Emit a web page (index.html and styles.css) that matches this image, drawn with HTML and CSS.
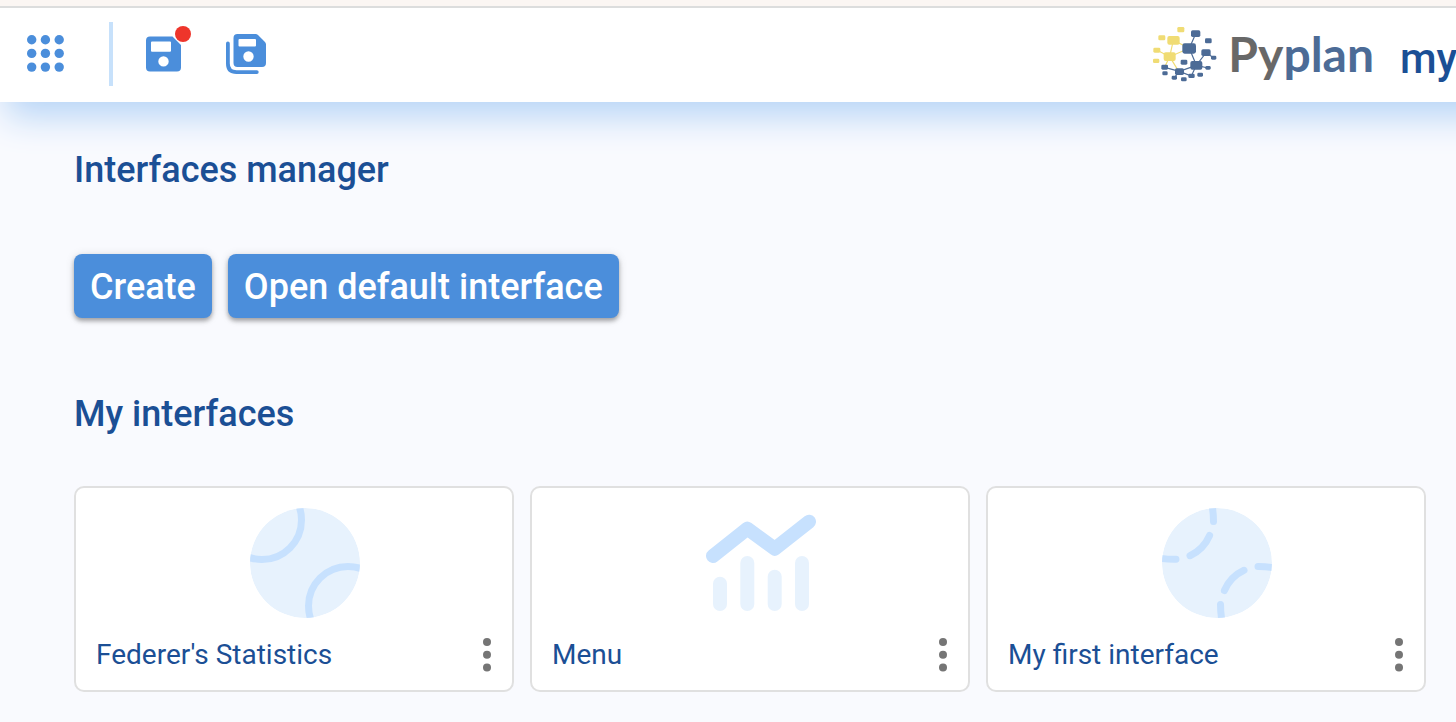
FILE: index.html
```html
<!DOCTYPE html>
<html lang="en">
<head>
<meta charset="utf-8">
<title>Pyplan - Interfaces manager</title>
<link rel="stylesheet" href="styles.css">
</head>
<body>
<header class="topbar">
  <button class="icon-button" type="button" aria-label="Applications">
    <svg width="40" height="40" viewBox="0 0 40 40" fill="currentColor">
      <circle cx="6.7" cy="5.7" r="4.7"/><circle cx="20.4" cy="5.7" r="4.7"/><circle cx="34.2" cy="5.7" r="4.7"/>
      <circle cx="6.7" cy="19.4" r="4.7"/><circle cx="20.4" cy="19.4" r="4.7"/><circle cx="34.2" cy="19.4" r="4.7"/>
      <circle cx="6.7" cy="33.1" r="4.7"/><circle cx="20.4" cy="33.1" r="4.7"/><circle cx="34.2" cy="33.1" r="4.7"/>
    </svg>
  </button>
  <span class="divider"></span>
  <button class="icon-button save" type="button" aria-label="Save">
    <svg width="40" height="40" viewBox="0 0 40 40" fill="currentColor">
      <path fill-rule="evenodd" d="M6 2.5H28.5L37 11V33.500A4 4 0 0 1 33 37.500H6A4 4 0 0 1 2 33.500V6.500A4 4 0 0 1 6 2.500ZM8 7.500A1 1 0 0 0 7 8.500V16.800A1 1 0 0 0 8 17.800H26A1 1 0 0 0 27 16.800V8.500A1 1 0 0 0 26 7.500ZM19.500 22.200A5.200 5.200 0 1 0 19.500 32.600A5.200 5.200 0 1 0 19.500 22.200Z"/>
    </svg>
    <span class="unsaved"></span>
  </button>
  <button class="icon-button" type="button" aria-label="Save as">
    <svg width="40" height="40" viewBox="0 0 40 40" fill="currentColor">
      <path fill-rule="evenodd" d="M11.500 0H29.500Q31 0 32 1L39 8Q40 9 40 10.500V29A4 4 0 0 1 36 33H11.500A4 4 0 0 1 7.500 29V4A4 4 0 0 1 11.500 0ZM13.500 5A1 1 0 0 0 12.500 6V11.500A1 1 0 0 0 13.500 12.500H29A1 1 0 0 0 30 11.500V6A1 1 0 0 0 29 5ZM22.500 17.300A5.200 5.200 0 1 0 22.500 27.700A5.200 5.200 0 1 0 22.500 17.300Z"/>
      <path d="M1.900 9.500V29.500Q1.900 38.100 10.500 38.100H30.800" fill="none" stroke="currentColor" stroke-width="3.800" stroke-linecap="round"/>
    </svg>
  </button>
  <div class="brand">
    <svg class="brand-mark" width="66" height="57" viewBox="36 30 198 171">
      <g stroke="#f0dc74" stroke-width="3.500" fill="none">
        <path d="M50 102L89 122L148 97M100 73L89 122L116 166M89 122L74 153M100 73L148 97"/>
      </g>
      <g stroke="#4c6b96" stroke-width="3.500" fill="none">
        <path d="M167 53L148 97L169 148L198 110L221 125M169 148L204 156M169 148L118 166L74 154M118 166L154 180L169 148M118 166L103 185"/>
      </g>
      <g fill="#f0dc74">
        <rect x="82" y="60" width="37" height="26" rx="6"/><rect x="71" y="109" width="36" height="26" rx="6"/>
        <rect x="112" y="33" width="21" height="16" rx="4"/><rect x="55" y="58" width="21" height="15" rx="4"/>
        <rect x="40" y="95" width="21" height="15" rx="4"/><rect x="39" y="128" width="19" height="13" rx="4"/>
      </g>
      <g fill="#4c6b96">
        <rect x="127" y="82" width="41" height="31" rx="7"/><rect x="153" y="43" width="28" height="20" rx="5"/>
        <rect x="195" y="67" width="20" height="15" rx="4"/><rect x="184" y="100" width="28" height="20" rx="5"/>
        <rect x="213" y="119" width="16" height="12" rx="4"/><rect x="151" y="135" width="36" height="26" rx="6"/>
        <rect x="122" y="131" width="20" height="15" rx="4"/><rect x="64" y="146" width="20" height="15" rx="4"/>
        <rect x="67" y="166" width="16" height="12" rx="4"/><rect x="105" y="157" width="27" height="20" rx="5"/>
        <rect x="95" y="179" width="16" height="12" rx="4"/><rect x="123" y="184" width="17" height="12" rx="4"/>
        <rect x="145" y="173" width="19" height="13" rx="4"/><rect x="172" y="170" width="17" height="12" rx="4"/>
        <rect x="196" y="150" width="16" height="11" rx="4"/>
      </g>
    </svg>
    <span class="brand-name">Py<span class="brand-accent">plan</span></span>
  </div>
  <div class="app-name">my</div>
</header>
<main class="content">
  <h1 class="heading">Interfaces manager</h1>
  <div class="actions">
    <button class="action" type="button">Create</button>
    <button class="action" type="button">Open default interface</button>
  </div>
  <h2 class="heading">My interfaces</h2>
  <div class="cards">
    <article class="card">
      <svg class="card-icon" width="110" height="110" viewBox="0 0 110 110">
        <clipPath id="ball"><circle cx="55" cy="55" r="55"/></clipPath>
        <g clip-path="url(#ball)">
          <circle cx="55" cy="55" r="55" fill="#e7f2fd"/>
          <g fill="none" stroke="#c7e1fe" stroke-width="7">
            <circle cx="12" cy="12" r="39.500"/><circle cx="98" cy="98" r="39.500"/>
          </g>
        </g>
      </svg>
      <div class="card-foot">
        <a class="card-title" href="#federer">Federer's Statistics</a>
        <button class="more" type="button" aria-label="Options for Federer's Statistics"><svg width="8" height="34" viewBox="0 0 8 34" fill="currentColor"><circle cx="4" cy="4" r="4"/><circle cx="4" cy="16.800" r="4"/><circle cx="4" cy="29.600" r="4"/></svg></button>
      </div>
    </article>
    <article class="card">
      <svg class="card-icon" width="110" height="110" viewBox="0 0 110 110">
        <path d="M7 48L41.300 20.700L68.700 40.700L103 13.700" fill="none" stroke="#c7e1fe" stroke-width="14" stroke-linecap="round" stroke-linejoin="round"/>
        <g fill="#e7f2fd">
          <rect x="7" y="68.700" width="14" height="34.300" rx="7"/><rect x="34.300" y="48" width="14" height="55" rx="7"/>
          <rect x="61.700" y="61.700" width="14" height="41.300" rx="7"/><rect x="89" y="48" width="14" height="55" rx="7"/>
        </g>
      </svg>
      <div class="card-foot">
        <a class="card-title" href="#menu">Menu</a>
        <button class="more" type="button" aria-label="Options for Menu"><svg width="8" height="34" viewBox="0 0 8 34" fill="currentColor"><circle cx="4" cy="4" r="4"/><circle cx="4" cy="16.800" r="4"/><circle cx="4" cy="29.600" r="4"/></svg></button>
      </div>
    </article>
    <article class="card">
      <svg class="card-icon" width="110" height="110" viewBox="0 0 110 110">
        <g clip-path="url(#ball)">
          <circle cx="55" cy="55" r="55" fill="#e7f2fd"/>
          <g fill="none" stroke="#c7e1fe" stroke-width="7" stroke-linecap="round">
            <path d="M50 -3Q51.500 5 51.500 13.500M47.600 27.500Q41.500 41.500 28 47.700M14 51.300Q5 51.500 -3 50"/>
            <path d="M60 113Q58.500 105 58.500 96.500M62.400 82.500Q68.500 68.500 82 62.300M96 58.500Q105 58.500 113 60"/>
          </g>
        </g>
      </svg>
      <div class="card-foot">
        <a class="card-title" href="#first">My first interface</a>
        <button class="more" type="button" aria-label="Options for My first interface"><svg width="8" height="34" viewBox="0 0 8 34" fill="currentColor"><circle cx="4" cy="4" r="4"/><circle cx="4" cy="16.800" r="4"/><circle cx="4" cy="29.600" r="4"/></svg></button>
      </div>
    </article>
  </div>
</main>
</body>
</html>
```
FILE: styles.css
```css
* {
  box-sizing: border-box;
}

body {
  margin: 0;
  border-top: 6px solid #fbf6f3;
  background: #f9fafe;
  color: #1b4f95;
  font-family: Roboto, "Liberation Sans", sans-serif;
  overflow-x: hidden;
}

button {
  margin: 0;
  padding: 0;
  border: 0;
  background: none;
  color: inherit;
  font: inherit;
  cursor: pointer;
}

svg {
  display: block;
}

/* The bar runs past the right edge so that its shadow does not fade there. */
.topbar {
  display: flex;
  align-items: center;
  height: 96px;
  margin-right: -40px;
  padding: 0 40px 2px 25px;
  border-top: 2px solid #dcdddd;
  background: #fff;
  box-shadow: 6px 14px 36px #b4d3f6;
}

.icon-button {
  flex: none;
  color: #4b8edb;
}

.divider {
  flex: none;
  width: 4px;
  height: 64px;
  margin: 0 31px 0 44px;
  background: #c7e1fb;
}

.save {
  position: relative;
  margin-right: 42px;
}

.unsaved {
  position: absolute;
  top: -8px;
  right: -7px;
  width: 16px;
  height: 16px;
  border-radius: 50%;
  background: #ee352b;
}

.brand {
  display: flex;
  align-items: center;
  gap: 10px;
  margin-left: auto;
}

.brand-name {
  color: #686868;
  font: 700 48px/56px Lato, sans-serif;
}

.brand-accent {
  color: #4c6b96;
}

.app-name {
  flex: none;
  width: 58px;
  margin-left: 24px;
  padding-top: 10px;
  font-size: 42px;
  font-weight: 500;
  line-height: 56px;
  text-indent: 2px;
  white-space: nowrap;
}

.content {
  padding: 46px 30px 30px 74px;
}

.heading {
  margin: 0;
  font-size: 36px;
  font-weight: 500;
  line-height: 44px;
}

.actions {
  display: flex;
  flex-wrap: wrap;
  gap: 16px;
  margin: 62px 0 74px;
}

.action {
  height: 64px;
  padding: 2px 16px 0;
  border-radius: 8px;
  background: #4b8edb;
  box-shadow: 0 3px 4px rgba(0, 0, 0, 0.3), 0 1px 10px rgba(0, 0, 0, 0.12);
  color: #fff;
  font-size: 36px;
  font-weight: 500;
}

.cards {
  display: grid;
  grid-template-columns: repeat(3, 1fr);
  gap: 16px;
  margin-top: 50px;
}

.card {
  padding: 20px 0 4px 20px;
  border: 2px solid #e0e0e0;
  border-radius: 10px;
  background: #fff;
}

.card-icon {
  margin: 0 auto;
  padding-left: 2px;
  box-sizing: content-box;
}

.card-foot {
  display: flex;
  align-items: center;
  justify-content: space-between;
  height: 64px;
  margin-top: 4px;
}

.card-title {
  padding-top: 1px;
  color: inherit;
  font-size: 28px;
  line-height: 36px;
  text-decoration: none;
}

.more {
  padding: 9px 21px 8px;
  color: #757575;
}
```
